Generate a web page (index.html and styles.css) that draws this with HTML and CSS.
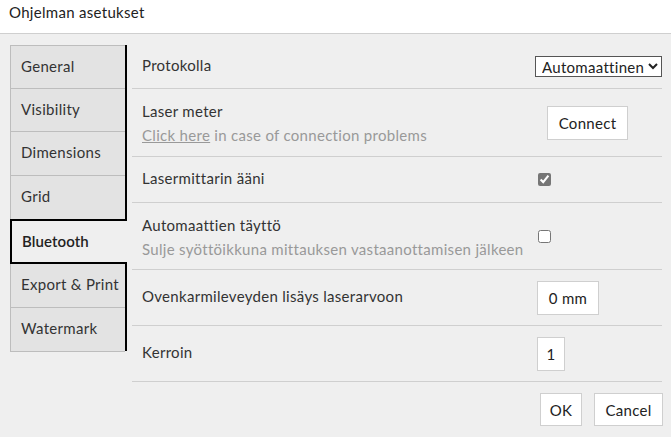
FILE: index.html
```html
<!DOCTYPE html>
<html>
<head>
<meta charset="utf-8">
<link rel="stylesheet" href="styles.css">
</head>
<body>
<div class="header">Ohjelman asetukset</div>
<div class="main">
  <div class="sidebar">
    <div class="tab">General</div>
    <div class="tab">Visibility</div>
    <div class="tab">Dimensions</div>
    <div class="tab">Grid</div>
    <div class="tab active">Bluetooth</div>
    <div class="tab">Export &amp; Print</div>
    <div class="tab">Watermark</div>
  </div>
  <div class="content">
    <div class="row r1">
      <div class="label">Protokolla</div>
      <div class="ctrl"><select class="sel"><option>Automaattinen</option></select></div>
    </div>
    <div class="row r2">
      <div class="label two">Laser meter<div class="sub"><span class="link">Click here</span> in case of connection problems</div></div>
      <div class="ctrl"><button class="btn connect">Connect</button></div>
    </div>
    <div class="row r3">
      <div class="label">Lasermittarin ääni</div>
      <div class="ctrl"><input type="checkbox" class="cb" checked></div>
    </div>
    <div class="row r4">
      <div class="label two">Automaattien täyttö<div class="sub">Sulje syöttöikkuna mittauksen vastaanottamisen jälkeen</div></div>
      <div class="ctrl"><input type="checkbox" class="cb"></div>
    </div>
    <div class="row r5">
      <div class="label">Ovenkarmileveyden lisäys laserarvoon</div>
      <div class="ctrl"><input class="inp mm" value="0 mm"></div>
    </div>
    <div class="row r6">
      <div class="label">Kerroin</div>
      <div class="ctrl"><input class="inp one" value="1"></div>
    </div>
    <div class="footer">
      <button class="btn ok">OK</button>
      <button class="btn cancel">Cancel</button>
    </div>
  </div>
</div>
</body>
</html>
```
FILE: styles.css
```css
html, body {
  margin: 0;
  padding: 0;
}
body {
  background: #efefef;
  font-family: Lato, "Open Sans", sans-serif;
  font-size: 15px;
  letter-spacing: 0.3px;
  color: #333;
  width: 671px;
  height: 437px;
  overflow: hidden;
}
.header {
  background: #fff;
  height: 33px;
  border-bottom: 1px solid #cfcfcf;
  padding-left: 9px;
  line-height: 25px;
  color: #222;
}
.main {
  display: flex;
  padding: 11px 9px 0 10px;
}
.sidebar {
  width: 115px;
  height: 306px;
  border-right: 2px solid #000;
  flex: none;
}
.tab {
  height: 43.7px;
  box-sizing: border-box;
  border: 1px solid #bdbdbd;
  border-right: none;
  border-top: none;
  background: #e3e3e3;
  padding-left: 10px;
  line-height: 40px;
  color: #333;
}
.tab:first-child {
  border-top: 1px solid #bdbdbd;
}
.tab.active {
  background: #efefef;
  border: 2px solid #000;
  border-right: none;
  margin-right: -2px;
  margin-top: -1px;
  height: 45.7px;
  position: relative;
  font-weight: 600;
  color: #222;
  letter-spacing: 0.1px;
}
.content {
  flex: 1;
  margin-left: 5px;
}
.row {
  display: grid;
  grid-template-columns: 1fr 127px;
  align-items: center;
  border-bottom: 1px solid #cfcfcf;
  padding: 0 0 0 10px;
  box-sizing: border-box;
}
.r1 { height: 44px; }
.r2 { height: 68px; }
.r3 { height: 46px; }
.r4 { height: 67px; }
.r5 { height: 56px; }
.r6 { height: 56px; }
.label {
  line-height: 24px;
  color: #333;
  margin-bottom: 3px;
}
.label.two {
  margin-bottom: 0;
  margin-top: 1px;
}
.sub {
  color: #999;
}
.link {
  text-decoration: underline;
}
.ctrl {
  display: flex;
  align-items: center;
}
.sel {
  font-family: Lato, "Open Sans", sans-serif;
  font-size: 15px;
  letter-spacing: 0.3px;
  height: 21px;
  width: 128px;
  border: 1px solid #555;
  background: #fff;
  color: #222;
  padding: 0 0 0 2px;
  margin: 0;
  border-radius: 0;
}
.btn {
  font-family: Lato, "Open Sans", sans-serif;
  font-size: 15px;
  letter-spacing: 0.3px;
  background: #fff;
  border: 1px solid #cfcfcf;
  color: #222;
  height: 34px;
  padding: 0 10px;
  margin: 0;
}
.connect {
  margin-left: 12px;
  width: 81px;
}
.cb {
  margin: 0 0 0 3px;
  width: 13px;
  height: 13px;
  accent-color: #767676;
}
.inp {
  font-family: Lato, "Open Sans", sans-serif;
  font-size: 15px;
  letter-spacing: 0.3px;
  background: #fff;
  border: 1px solid #cfcfcf;
  color: #222;
  height: 34px;
  box-sizing: border-box;
  margin: 0 0 0 2px;
  padding: 0;
  text-align: center;
}
.mm { width: 62px; }
.one { width: 28px; }
.r6 .inp { margin-top: 1px; }
.footer {
  display: flex;
  justify-content: flex-end;
  gap: 12px;
  padding-top: 11px;
  margin-right: -1px;
}
.ok { width: 42px; height: 33px; padding: 0; }
.cancel { width: 69px; height: 33px; padding: 0; }
```
